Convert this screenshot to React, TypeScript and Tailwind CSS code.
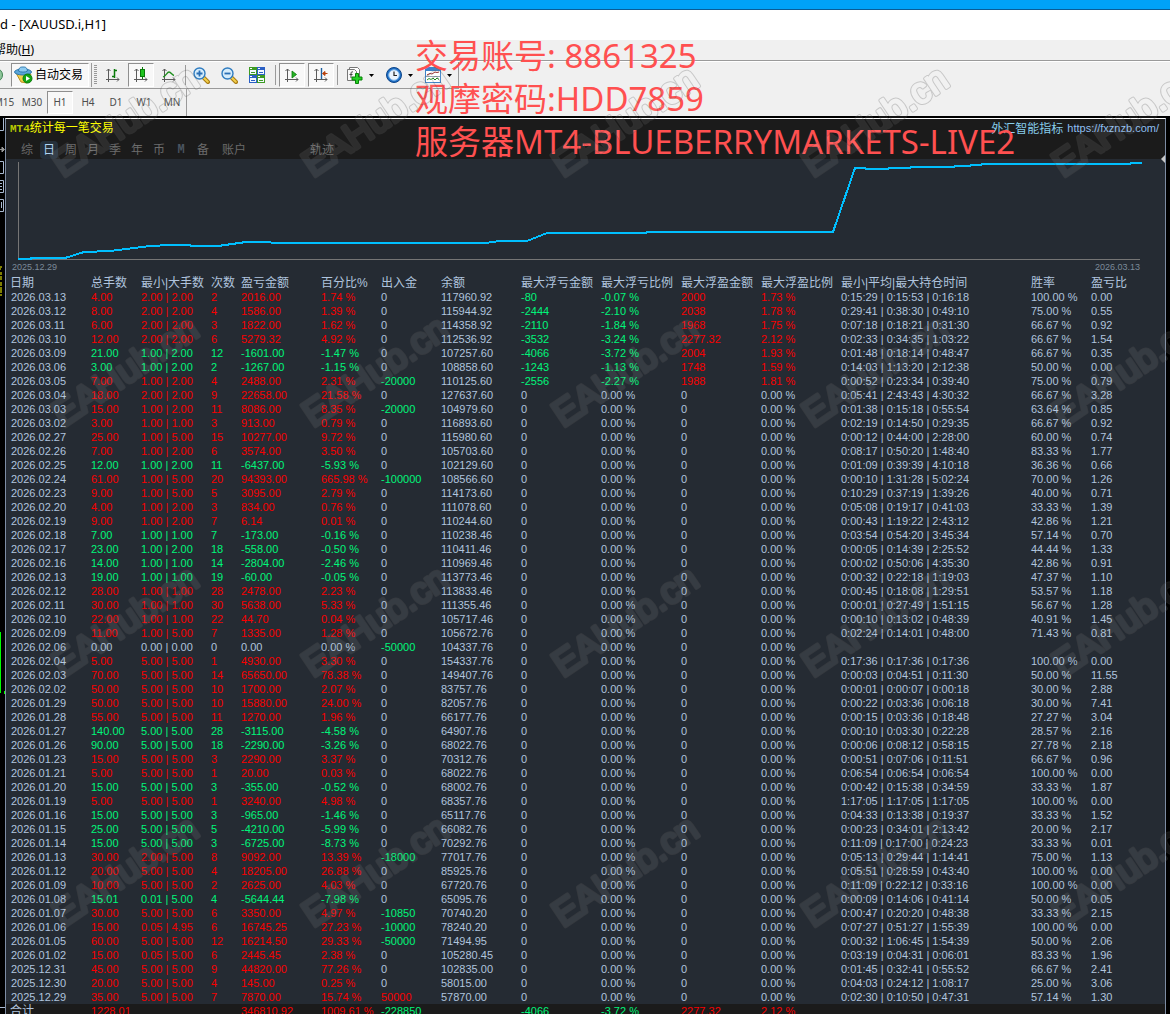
import type { ReactNode } from 'react'
import clsx from 'clsx'

type Row = [
  date: string,
  lots: string,
  range: string,
  count: string,
  profit: string,
  percent: string,
  flow: string,
  balance: string,
  hold: string,
  winRate: string,
  ratio: string,
  floating?: [string, string, string, string],
]

const HEADERS = [
  '日期', '总手数', '最小|大手数', '次数', '盈亏金额', '百分比%', '出入金', '余额',
  '最大浮亏金额', '最大浮亏比例', '最大浮盈金额', '最大浮盈比例', '最小|平均|最大持仓时间', '胜率', '盈亏比',
]

const ROWS: Row[] = [
  ['2026.03.13', '4.00', '2.00 | 2.00', '2', '2016.00', '1.74', '0', '117960.92', '0:15:29 | 0:15:53 | 0:16:18', '100.00', '0.00', ['-80', '-0.07', '2000', '1.73']],
  ['2026.03.12', '8.00', '2.00 | 2.00', '4', '1586.00', '1.39', '0', '115944.92', '0:29:41 | 0:38:30 | 0:49:10', '75.00', '0.55', ['-2444', '-2.10', '2038', '1.78']],
  ['2026.03.11', '6.00', '2.00 | 2.00', '3', '1822.00', '1.62', '0', '114358.92', '0:07:18 | 0:18:21 | 0:31:30', '66.67', '0.92', ['-2110', '-1.84', '1968', '1.75']],
  ['2026.03.10', '12.00', '2.00 | 2.00', '6', '5279.32', '4.92', '0', '112536.92', '0:02:33 | 0:34:35 | 1:03:22', '66.67', '1.54', ['-3532', '-3.24', '2277.32', '2.12']],
  ['2026.03.09', '21.00', '1.00 | 2.00', '12', '-1601.00', '-1.47', '0', '107257.60', '0:01:48 | 0:18:14 | 0:48:47', '66.67', '0.35', ['-4066', '-3.72', '2004', '1.93']],
  ['2026.03.06', '3.00', '1.00 | 2.00', '2', '-1267.00', '-1.15', '0', '108858.60', '0:14:03 | 1:13:20 | 2:12:38', '50.00', '0.00', ['-1243', '-1.13', '1748', '1.59']],
  ['2026.03.05', '7.00', '1.00 | 2.00', '4', '2488.00', '2.31', '-20000', '110125.60', '0:00:52 | 0:23:34 | 0:39:40', '75.00', '0.79', ['-2556', '-2.27', '1988', '1.81']],
  ['2026.03.04', '18.00', '2.00 | 2.00', '9', '22658.00', '21.58', '0', '127637.60', '0:05:41 | 2:43:43 | 4:30:32', '66.67', '3.28'],
  ['2026.03.03', '15.00', '1.00 | 2.00', '11', '8086.00', '8.35', '-20000', '104979.60', '0:01:38 | 0:15:18 | 0:55:54', '63.64', '0.85'],
  ['2026.03.02', '3.00', '1.00 | 1.00', '3', '913.00', '0.79', '0', '116893.60', '0:02:19 | 0:14:50 | 0:29:35', '66.67', '0.92'],
  ['2026.02.27', '25.00', '1.00 | 5.00', '15', '10277.00', '9.72', '0', '115980.60', '0:00:12 | 0:44:00 | 2:28:00', '60.00', '0.74'],
  ['2026.02.26', '7.00', '1.00 | 2.00', '6', '3574.00', '3.50', '0', '105703.60', '0:08:17 | 0:50:20 | 1:48:40', '83.33', '1.77'],
  ['2026.02.25', '12.00', '1.00 | 2.00', '11', '-6437.00', '-5.93', '0', '102129.60', '0:01:09 | 0:39:39 | 4:10:18', '36.36', '0.66'],
  ['2026.02.24', '61.00', '1.00 | 5.00', '20', '94393.00', '665.98', '-100000', '108566.60', '0:00:10 | 1:31:28 | 5:02:24', '70.00', '1.26'],
  ['2026.02.23', '9.00', '1.00 | 5.00', '5', '3095.00', '2.79', '0', '114173.60', '0:10:29 | 0:37:19 | 1:39:26', '40.00', '0.71'],
  ['2026.02.20', '4.00', '1.00 | 2.00', '3', '834.00', '0.76', '0', '111078.60', '0:05:08 | 0:19:17 | 0:41:03', '33.33', '1.39'],
  ['2026.02.19', '9.00', '1.00 | 2.00', '7', '6.14', '0.01', '0', '110244.60', '0:00:43 | 1:19:22 | 2:43:12', '42.86', '1.21'],
  ['2026.02.18', '7.00', '1.00 | 1.00', '7', '-173.00', '-0.16', '0', '110238.46', '0:03:54 | 0:54:20 | 3:45:34', '57.14', '0.70'],
  ['2026.02.17', '23.00', '1.00 | 2.00', '18', '-558.00', '-0.50', '0', '110411.46', '0:00:05 | 0:14:39 | 2:25:52', '44.44', '1.33'],
  ['2026.02.16', '14.00', '1.00 | 1.00', '14', '-2804.00', '-2.46', '0', '110969.46', '0:00:02 | 0:50:06 | 4:35:30', '42.86', '0.91'],
  ['2026.02.13', '19.00', '1.00 | 1.00', '19', '-60.00', '-0.05', '0', '113773.46', '0:00:32 | 0:22:18 | 1:19:03', '47.37', '1.10'],
  ['2026.02.12', '28.00', '1.00 | 1.00', '28', '2478.00', '2.23', '0', '113833.46', '0:00:45 | 0:18:08 | 1:29:51', '53.57', '1.18'],
  ['2026.02.11', '30.00', '1.00 | 1.00', '30', '5638.00', '5.33', '0', '111355.46', '0:00:01 | 0:27:49 | 1:51:15', '56.67', '1.28'],
  ['2026.02.10', '22.00', '1.00 | 1.00', '22', '44.70', '0.04', '0', '105717.46', '0:00:10 | 0:13:02 | 0:48:39', '40.91', '1.45'],
  ['2026.02.09', '11.00', '1.00 | 5.00', '7', '1335.00', '1.28', '0', '105672.76', '0:02:24 | 0:14:01 | 0:48:00', '71.43', '0.81'],
  ['2026.02.06', '0.00', '0.00 | 0.00', '0', '0.00', '0.00', '-50000', '104337.76', '', '', ''],
  ['2026.02.04', '5.00', '5.00 | 5.00', '1', '4930.00', '3.30', '0', '154337.76', '0:17:36 | 0:17:36 | 0:17:36', '100.00', '0.00'],
  ['2026.02.03', '70.00', '5.00 | 5.00', '14', '65650.00', '78.38', '0', '149407.76', '0:00:03 | 0:04:51 | 0:11:30', '50.00', '11.55'],
  ['2026.02.02', '50.00', '5.00 | 5.00', '10', '1700.00', '2.07', '0', '83757.76', '0:00:01 | 0:00:07 | 0:00:18', '30.00', '2.88'],
  ['2026.01.29', '50.00', '5.00 | 5.00', '10', '15880.00', '24.00', '0', '82057.76', '0:00:22 | 0:03:36 | 0:06:18', '30.00', '7.41'],
  ['2026.01.28', '55.00', '5.00 | 5.00', '11', '1270.00', '1.96', '0', '66177.76', '0:00:15 | 0:03:36 | 0:18:48', '27.27', '3.04'],
  ['2026.01.27', '140.00', '5.00 | 5.00', '28', '-3115.00', '-4.58', '0', '64907.76', '0:00:10 | 0:03:30 | 0:22:28', '28.57', '2.16'],
  ['2026.01.26', '90.00', '5.00 | 5.00', '18', '-2290.00', '-3.26', '0', '68022.76', '0:00:06 | 0:08:12 | 0:58:15', '27.78', '2.18'],
  ['2026.01.23', '15.00', '5.00 | 5.00', '3', '2290.00', '3.37', '0', '70312.76', '0:00:51 | 0:07:06 | 0:11:51', '66.67', '0.96'],
  ['2026.01.21', '5.00', '5.00 | 5.00', '1', '20.00', '0.03', '0', '68022.76', '0:06:54 | 0:06:54 | 0:06:54', '100.00', '0.00'],
  ['2026.01.20', '15.00', '5.00 | 5.00', '3', '-355.00', '-0.52', '0', '68002.76', '0:00:42 | 0:15:38 | 0:34:59', '33.33', '1.87'],
  ['2026.01.19', '5.00', '5.00 | 5.00', '1', '3240.00', '4.98', '0', '68357.76', '1:17:05 | 1:17:05 | 1:17:05', '100.00', '0.00'],
  ['2026.01.16', '15.00', '5.00 | 5.00', '3', '-965.00', '-1.46', '0', '65117.76', '0:04:33 | 0:13:38 | 0:19:37', '33.33', '1.52'],
  ['2026.01.15', '25.00', '5.00 | 5.00', '5', '-4210.00', '-5.99', '0', '66082.76', '0:00:23 | 0:34:01 | 2:13:42', '20.00', '2.17'],
  ['2026.01.14', '15.00', '5.00 | 5.00', '3', '-6725.00', '-8.73', '0', '70292.76', '0:11:09 | 0:17:00 | 0:24:23', '33.33', '0.01'],
  ['2026.01.13', '30.00', '2.00 | 5.00', '8', '9092.00', '13.39', '-18000', '77017.76', '0:05:13 | 0:29:44 | 1:14:41', '75.00', '1.13'],
  ['2026.01.12', '20.00', '5.00 | 5.00', '4', '18205.00', '26.88', '0', '85925.76', '0:05:51 | 0:28:59 | 0:43:40', '100.00', '0.00'],
  ['2026.01.09', '10.00', '5.00 | 5.00', '2', '2625.00', '4.03', '0', '67720.76', '0:11:09 | 0:22:12 | 0:33:16', '100.00', '0.00'],
  ['2026.01.08', '15.01', '0.01 | 5.00', '4', '-5644.44', '-7.98', '0', '65095.76', '0:00:09 | 0:14:06 | 0:41:14', '50.00', '0.05'],
  ['2026.01.07', '30.00', '5.00 | 5.00', '6', '3350.00', '4.97', '-10850', '70740.20', '0:00:47 | 0:20:20 | 0:48:38', '33.33', '2.15'],
  ['2026.01.06', '15.00', '0.05 | 4.95', '6', '16745.25', '27.23', '-10000', '78240.20', '0:07:27 | 0:51:27 | 1:55:39', '100.00', '0.00'],
  ['2026.01.05', '60.00', '5.00 | 5.00', '12', '16214.50', '29.33', '-50000', '71494.95', '0:00:32 | 1:06:45 | 1:54:39', '50.00', '2.06'],
  ['2026.01.02', '15.00', '0.05 | 5.00', '6', '2445.45', '2.38', '0', '105280.45', '0:03:19 | 0:04:31 | 0:06:01', '83.33', '1.96'],
  ['2025.12.31', '45.00', '5.00 | 5.00', '9', '44820.00', '77.26', '0', '102835.00', '0:01:45 | 0:32:41 | 0:55:52', '66.67', '2.41'],
  ['2025.12.30', '20.00', '5.00 | 5.00', '4', '145.00', '0.25', '0', '58015.00', '0:04:03 | 0:24:12 | 1:08:17', '25.00', '3.06'],
  ['2025.12.29', '35.00', '5.00 | 5.00', '7', '7870.00', '15.74', '50000', '57870.00', '0:02:30 | 0:10:50 | 0:47:31', '57.14', '1.30'],
]

const EQUITY =
  '12,100 25,100 25,99 59,99 78,93 104,92 144,87 164,86 184,86 185,87 212,87 240,83 262,83 268,84 479,84 494,82 521,82 541,74 640,74 641,73 827,73 849,9 859,9 860,10 882,10 883,9 904,9 905,8 948,8 949,7 964,7 965,6 975,6 976,5 1124,5 1125,4 1136,4'

// red for gains, green for losses
function tone(value: string) {
  const n = parseFloat(value)
  if (n > 0) return 'text-[#f80000]'
  if (n < 0) return 'text-[#00f57a]'
  return 'text-[#b0c4de]'
}

const pct = (v: string) => (v ? `${v} %` : '')

/* ---------- toolbar icons ---------- */

function Axes() {
  return <path d="M3.5 15V2M1.5 4l2-2 2 2M1 12.5h13M12 10.5l2 2-2 2" fill="none" stroke="#5a5a5a" strokeWidth="1" />
}

function Icon({ children, w = 16 }: { children: ReactNode; w?: number }) {
  return (
    <svg width={w} height="16" viewBox={`0 0 ${w} 16`} className="shrink-0" aria-hidden="true">
      {children}
    </svg>
  )
}

const ExpertIcon = () => (
  <svg width="19" height="18" viewBox="0 0 19 18" className="shrink-0" aria-hidden="true">
    <path d="M2 7l5 9 6 1 4-9z" fill="#f3cf4a" stroke="#b98f1d" />
    <ellipse cx="9" cy="6" rx="8.500" ry="3" fill="#5aa5d8" stroke="#2f78ad" />
    <path d="M4.500 5C5 1 7 1 9 1s4 0 4.500 4c-2 1.500-7 1.500-9 0z" fill="#8ccaf0" stroke="#2f78ad" />
    <circle cx="13.500" cy="12.500" r="4.500" fill="#14a514" stroke="#0b7d0b" />
    <path d="M12 10v5l4-2.500z" fill="#fff" />
  </svg>
)

const BarsIcon = () => (
  <Icon>
    <Axes />
    <path d="M9.500 2v9M10 9.500H7M9 3.500h3" stroke="#0a7a0a" strokeWidth="1.500" fill="none" />
  </Icon>
)

const CandleIcon = () => (
  <Icon>
    <Axes />
    <path d="M9.500 0v12" stroke="#0a7a0a" />
    <rect x="7.500" y="2.500" width="4" height="7" fill="#1fc41f" stroke="#0a7a0a" />
  </Icon>
)

const LineIcon = () => (
  <Icon>
    <Axes />
    <path d="M2 10c3-1 4-5 6-5s3 3 5 3.500" stroke="#1f8f1f" fill="none" strokeWidth="1.300" />
  </Icon>
)

const ZoomIcon = ({ plus }: { plus?: boolean }) => (
  <svg width="17" height="17" viewBox="0 0 17 17" className="shrink-0" aria-hidden="true">
    <path d="M10 10l5 5" stroke="#a87a12" strokeWidth="4" strokeLinecap="round" />
    <path d="M10.500 10.500l4.300 4.300" stroke="#f2cf4c" strokeWidth="2" strokeLinecap="round" />
    <circle cx="6.500" cy="6.500" r="5.500" fill="#d5ecfb" stroke="#2f7cc0" strokeWidth="1.400" />
    <path d={plus ? 'M3.500 6.500h6M6.500 3.500v6' : 'M3.500 6.500h6'} stroke="#2a6fb5" strokeWidth="1.800" />
  </svg>
)

const TileIcon = () => (
  <Icon>
    {[
      [0, 0, '#3d9a22'],
      [8, 0, '#2a5fc4'],
      [0, 8, '#2a5fc4'],
      [8, 8, '#3d9a22'],
    ].map(([x, y, c], i) => (
      <g key={i} transform={`translate(${x} ${y})`}>
        <rect width="8" height="8" fill={c as string} />
        <rect x="1" y="3" width="6" height="4" fill="#f2f8ff" />
        <path d="M2 5.500h4" stroke={c as string} />
        <path d="M1 1.500h2" stroke="#fff" />
      </g>
    ))}
  </Icon>
)

const ScrollIcon = () => (
  <Icon>
    <Axes />
    <path d="M8 4v7l4.500-3.500z" fill="#25b325" stroke="#0a7a0a" strokeWidth=".8" />
  </Icon>
)

const ShiftIcon = () => (
  <Icon>
    <Axes />
    <path d="M8.500 1v11" stroke="#1c5fa0" strokeWidth="1.400" />
    <path d="M14.500 6.500H11M12 4.500l-2.500 2 2.500 2z" stroke="#b8420e" fill="#b8420e" />
  </Icon>
)

const AddIcon = () => (
  <svg width="17" height="17" viewBox="0 0 17 17" className="shrink-0" aria-hidden="true">
    <path d="M3.500 3V.5h8l2 2V11h-3" fill="#fff" stroke="#777" />
    <path d="M1.500 2.500h7l2 2v9h-9z" fill="#f8f8f8" stroke="#777" />
    <path d="M7 5c-1.500-.5-2 0-2 2v4M3.500 7.500h3" stroke="#444" fill="none" />
    <path d="M9.500 6.500h3v3.500h3.500v3h-3.500v3.500h-3V13H6v-3h3.500z" fill="#25cf25" stroke="#078307" />
  </svg>
)

const ClockIcon = () => (
  <Icon>
    <circle cx="8" cy="8" r="7.500" fill="#1e6fc6" stroke="#0e4588" />
    <circle cx="8" cy="8" r="5.300" fill="#eaf4fd" stroke="#7fb6ea" />
    <path d="M8 4.500V8.500h3" stroke="#222" fill="none" strokeWidth="1.200" />
  </Icon>
)

const TemplateIcon = () => (
  <Icon>
    <rect x=".5" y=".5" width="15" height="15" fill="#fff" stroke="#3d82c8" />
    <path d="M0 2h16" stroke="#3d82c8" strokeWidth="4" />
    <path d="M1 9.500h14" stroke="#8a9aa8" />
    <path d="M2 8l3-1.500 2 .5 3-2 2 .5 2-.5" stroke="#8c2020" fill="none" />
    <path d="M2 13l2-1.500 2 1 2-1.500 2 2 2-2 2 1.500" stroke="#148a14" fill="none" />
  </Icon>
)

const Caret = () => (
  <svg width="5" height="3" viewBox="0 0 5 3" aria-hidden="true">
    <path d="M0 0h5L2.500 3z" fill="#000" />
  </svg>
)

function Tool({ label, on, children }: { label: string; on?: boolean; children: ReactNode }) {
  return (
    <button
      type="button"
      aria-label={label}
      className={clsx(
        'flex h-6 w-[26px] shrink-0 items-center justify-center border',
        on ? 'border-t-[#8f8f8f] border-l-[#8f8f8f] border-r-white border-b-white bg-[#f8f8f8]' : 'border-transparent',
      )}
    >
      {children}
    </button>
  )
}

const Separator = () => <span className="h-5 w-px shrink-0 bg-[#9a9a9a]" />

function Toolbar() {
  return (
    <div className="flex h-[27px] w-[459px] items-center border-r border-b border-[#9a9a9a]">
      <svg width="4" height="16" viewBox="0 0 4 16" className="shrink-0" aria-hidden="true">
        <circle cx="-4" cy="8" r="6.500" fill="#8fc79b" stroke="#3c8050" />
      </svg>
      <button
        type="button"
        className="ml-[7px] flex h-6 w-[78px] shrink-0 items-center gap-0.5 border border-t-[#8f8f8f] border-l-[#8f8f8f] border-r-white border-b-white bg-[#f8f8f8] pl-0.5 text-[12px] whitespace-nowrap text-black"
      >
        <ExpertIcon />
        自动交易
      </button>
      <span className="ml-0.5 h-6 w-px shrink-0 bg-[#9a9a9a]" />
      <svg width="4" height="20" viewBox="0 0 4 20" className="ml-0.5 shrink-0" aria-hidden="true">
        <path d="M1.500 0v20" stroke="#999" strokeWidth="3" strokeDasharray="1 1" />
      </svg>
      <div className="ml-0.5 flex items-center gap-0.5">
        <Tool label="柱状图"><BarsIcon /></Tool>
        <Tool label="K线图" on><CandleIcon /></Tool>
        <Tool label="折线图"><LineIcon /></Tool>
      </div>
      <div className="ml-[3px] flex items-center gap-0.5">
        <Separator />
        <Tool label="放大"><ZoomIcon plus /></Tool>
        <Tool label="缩小"><ZoomIcon /></Tool>
        <Tool label="平铺窗口"><TileIcon /></Tool>
      </div>
      <div className="ml-[5px] flex items-center gap-[3px]">
        <Separator />
        <Tool label="自动滚动" on><ScrollIcon /></Tool>
        <Tool label="图表平移" on><ShiftIcon /></Tool>
        <Separator />
      </div>
      <div className="ml-2 flex items-center gap-3">
        <button type="button" aria-label="指标" className="flex items-center gap-1.5"><AddIcon /><Caret /></button>
        <button type="button" aria-label="周期" className="flex items-center gap-1.5"><ClockIcon /><Caret /></button>
        <button type="button" aria-label="模板" className="flex items-center gap-1.5"><TemplateIcon /><Caret /></button>
      </div>
    </div>
  )
}

function Timeframes() {
  return (
    <div className="flex h-[27px] w-[187px] items-center border-r border-[#9a9a9a]">
      <div className="-ml-[9px] flex">
        {['M15', 'M30', 'H1', 'H4', 'D1', 'W1', 'MN'].map((t) => (
          <button
            key={t}
            type="button"
            className={clsx(
              'mr-0.5 h-[23px] w-[26px] border text-center text-[10px] text-[#4d4d4d]',
              t === 'H1'
                ? 'border-t-[#8f8f8f] border-l-[#8f8f8f] border-r-white border-b-white bg-[#f8f8f8]'
                : 'border-transparent',
            )}
          >
            {t}
          </button>
        ))}
      </div>
    </div>
  )
}

function PanelHeader() {
  return (
    <div className="bg-[#1b1b1b]">
      <div className="flex h-[19px] items-center justify-between pr-1.5 pl-1 text-[12px]">
        <h1 className="text-[#ffff00]">
          <span className="font-['Liberation_Mono'] text-[11px] font-bold text-[#b8c800]">MT4</span>
          统计每一笔交易
        </h1>
        <p className="flex items-center gap-1 text-[#87ceeb]">
          外汇智能指标
          <a href="https://fxznzb.com/" className="font-['Liberation_Sans'] text-[11px] text-[#8fbff0]">
            https://fxznzb.com/
          </a>
        </p>
      </div>
      <nav className="flex h-[21px] items-end pl-2.5 text-[12px] text-[#6b6b6b]">
        {['综', '日', '周', '月', '季', '年', '币', 'M', '备'].map((t) => (
          <button
            key={t}
            type="button"
            className={clsx(
              'mx-0.5 h-[18px] w-[18px] leading-[18px]',
              t === '日' && 'rounded-sm bg-[#25303b] text-[#b0d4f4]',
              t === 'M' && "font-['Liberation_Mono'] text-[12px] font-bold text-[#4a5560]",
            )}
          >
            {t}
          </button>
        ))}
        <button type="button" className="h-[18px] w-10 leading-[18px] whitespace-nowrap">账户</button>
        <button type="button" className="ml-12 h-[18px] w-10 leading-[18px] whitespace-nowrap">轨迹</button>
      </nav>
    </div>
  )
}

function EquityChart() {
  return (
    <div className="h-[117px]">
      <svg viewBox="0 0 1159 102" preserveAspectRatio="none" className="h-[102px] w-full" role="img" aria-label="余额曲线" shapeRendering="crispEdges">
        <path d="M12.500 3v98M12 100.500h1122" stroke="#757575" fill="none" />
        <polyline points={EQUITY} fill="none" stroke="#00bfff" strokeWidth="2" />
      </svg>
      <div className="flex justify-between pr-[25px] pl-[6px] font-['Liberation_Sans'] text-[9px] leading-[12px] text-[#7b8a99]">
        <span>2025.12.29</span>
        <span>2026.03.13</span>
      </div>
    </div>
  )
}

function StatsTable() {
  return (
    <table className="w-full table-fixed border-collapse text-left text-[11px] leading-[14px] whitespace-nowrap text-[#b0c4de] [&_td]:h-[14px] [&_td]:p-0">
      <colgroup>
        <col className="w-[85px]" />
        <col className="w-[50px]" />
        <col className="w-[70px]" />
        <col className="w-[30px]" />
        <col className="w-[80px]" />
        <col className="w-[60px]" />
        <col className="w-[60px]" />
        <col className="w-[80px]" />
        <col className="w-[80px]" />
        <col className="w-[80px]" />
        <col className="w-[80px]" />
        <col className="w-[80px]" />
        <col className="w-[190px]" />
        <col className="w-[60px]" />
        <col />
      </colgroup>
      <thead className="font-['Liberation_Sans','Noto_Sans_CJK_SC',sans-serif]">
        <tr>
          {HEADERS.map((h) => (
            <th key={h} className="h-[14px] p-0 text-[12px] font-normal first:pl-1">{h}</th>
          ))}
        </tr>
      </thead>
      <tbody className="font-['Liberation_Sans']">
        {ROWS.map(([date, lots, range, count, profit, percent, flow, balance, hold, winRate, ratio, floating]) => {
          const color = tone(profit)
          const [dd, ddPct, up, upPct] = floating ?? ['0', '0.00', '0', '0.00']
          return (
            <tr key={date}>
              <td><span className="pl-[5px]">{date}</span></td>
              <td className={color}>{lots}</td>
              <td className={color}>{range}</td>
              <td className={color}>{count}</td>
              <td className={color}>{profit}</td>
              <td className={color}>{pct(percent)}</td>
              <td className={tone(flow)}>{flow}</td>
              <td>{balance}</td>
              <td className={tone(dd)}>{dd}</td>
              <td className={tone(ddPct)}>{pct(ddPct)}</td>
              <td className={tone(up)}>{up}</td>
              <td className={tone(upPct)}>{pct(upPct)}</td>
              <td>{hold}</td>
              <td>{pct(winRate)}</td>
              <td>{ratio}</td>
            </tr>
          )
        })}
      </tbody>
      <tfoot className="bg-[#1b1b1b] font-['Liberation_Sans','Noto_Sans_CJK_SC',sans-serif] text-[#f80000]">
        <tr>
          <td className="text-[12px] text-[#b0c4de]"><span className="pl-1">合计</span></td>
          <td>1228.01</td>
          <td />
          <td />
          <td>346810.92</td>
          <td>1009.61 %</td>
          <td className="text-[#00f57a]">-228850</td>
          <td />
          <td className="text-[#00f57a]">-4066</td>
          <td className="text-[#00f57a]">-3.72 %</td>
          <td>2277.32</td>
          <td>2.12 %</td>
          <td />
          <td />
          <td />
        </tr>
      </tfoot>
    </table>
  )
}

// sliver of the window that sits behind the statistics panel
function LeftEdge() {
  return (
    <svg width="5" height="890" viewBox="0 0 5 890" className="shrink-0" aria-hidden="true">
      <path d="M0 12.500h3.500V0" stroke="#a9b9d0" fill="none" />
      <path d="M0 31.500h3M2 29v5l2.500-2.500z" stroke="#999" fill="#999" />
      <g stroke="#a9b9d0" fill="none">
        <path d="M0 43.500h3.500v12H0M0 62.500h3.500v12H0M0 65.500h2M0 68.500h2M0 71.500h2M0 81.500h3.500v12H0M1.500 84v6" />
      </g>
      <path d="M0 149h2M0 151h1M1 154v3M0 159h2M0 161h2M1 164v4M0 170h2M1 171v4M0 177h2" stroke="#ffff00" fill="none" />
      <path d="M.5 514v61M4.500 573v3" stroke="#00ff00" />
      <path d="M0 889.500h5" stroke="#a9b9d0" />
    </svg>
  )
}

function Watermark() {
  const cols = [0, 1, 2, 3, 4]
  const rows = [0, 1, 2, 3]
  const label = 'EAHub.cn'
  return (
    <svg
      className="pointer-events-none absolute inset-0 h-full w-full"
      fontFamily="Liberation Sans"
      fontSize="37"
      strokeLinejoin="round"
      aria-hidden="true"
    >
      {/* keeps the grey rim outside the letter bodies */}
      <mask id="rim" maskUnits="userSpaceOnUse" x="-10" y="-40" width="200" height="60">
        <rect x="-10" y="-40" width="200" height="60" fill="#fff" />
        <text fill="#000" stroke="#000" strokeWidth="2">{label}</text>
      </mask>
      {rows.flatMap((r) =>
        cols.map((c) => (
          <g key={`${r}-${c}`} transform={`translate(${63 + c * 250} ${178 + r * 250}) rotate(-34)`}>
            <g opacity="0.28">
              <text mask="url(#rim)" fill="#606060" stroke="#606060" strokeWidth="4">{label}</text>
            </g>
            <g opacity="0.08">
              <text fill="#fff" stroke="#fff" strokeWidth="2">{label}</text>
            </g>
          </g>
        )),
      )}
    </svg>
  )
}

export default function App() {
  return (
    <div className="relative flex h-screen flex-col overflow-hidden bg-[#f0f0f0] font-['Noto_Sans','Noto_Sans_CJK_SC',sans-serif]">
      <div className="h-2.5 shrink-0 border-b border-[#0a5c96] bg-[#00a2f8]" />
      <div className="flex h-[30px] shrink-0 items-center bg-white text-[13px] text-black">d - [XAUUSD.i,H1]</div>
      <div className="flex h-[21px] shrink-0 items-center border-b border-[#9a9a9a] text-[12px] text-black">
        <button type="button" className="-ml-1.5 whitespace-nowrap">
          帮助(<u>H</u>)
        </button>
      </div>
      <div className="shrink-0 border-t border-white border-b-0">
        <Toolbar />
        <Timeframes />
      </div>

      <main className="flex min-h-0 flex-1 border-t-2 border-black bg-black">
        <LeftEdge />
        <section className="relative min-w-0 flex-1 border-t border-r border-l border-t-white border-r-[#7d8ca3] border-l-[#7d8ca3] bg-[#252b33]">
          <PanelHeader />
          <EquityChart />
          <StatsTable />
          <svg width="4" height="8" viewBox="0 0 4 8" className="absolute top-[36px] right-0" aria-hidden="true">
            <path d="M4 0v8L0 4z" fill="#c8c8c8" />
          </svg>
        </section>
        <div className="w-1 shrink-0" />
      </main>

      <div className="absolute top-[34px] left-[415px] text-[33px] leading-[43px] whitespace-nowrap text-[#ff5050]">
        <p>交易账号: 8861325</p>
        <p>观摩密码:HDD7859</p>
        <p>服务器MT4-BLUEBERRYMARKETS-LIVE2</p>
      </div>
      <Watermark />
    </div>
  )
}
